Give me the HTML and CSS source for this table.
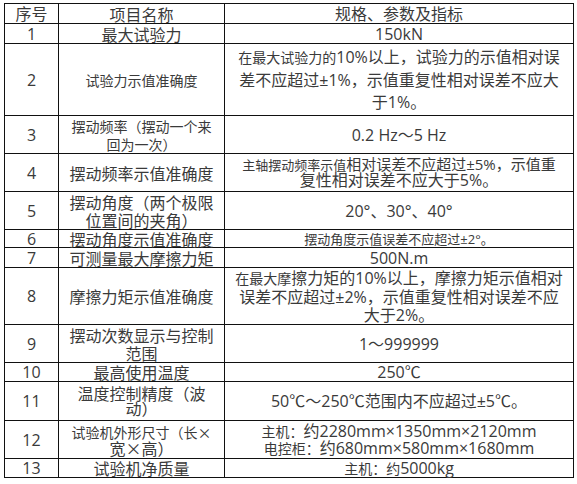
FILE: index.html
```html
<!DOCTYPE html>
<html lang="zh-CN">
<head>
<meta charset="utf-8">
<title>规格、参数及指标</title>
<link rel="stylesheet" href="styles.css">
</head>
<body>
<table class="spec">
  <colgroup>
    <col class="c-no">
    <col class="c-name">
    <col class="c-val">
  </colgroup>
  <tr class="r20">
    <td>序号</td><td class="nm">项目名称</td><td>规格、参数及指标</td>
  </tr>
  <tr class="r20">
    <td>1</td><td class="nm">最大试验力</td><td>150kN</td>
  </tr>
  <tr class="r72">
    <td>2</td>
    <td class="nm f14">试验力示值准确度</td>
    <td class="lh22"><span class="sm">在最大试验力的</span>10%以上，试验力的示值相对误<br>差不应超过±1%，示值重复性相对误差不应大<br>于1%。</td>
  </tr>
  <tr class="r38">
    <td>3</td>
    <td class="nm f14 lh18">摆动频率（摆动一个来<br>回为一次）</td>
    <td>0.2 Hz～5 Hz</td>
  </tr>
  <tr class="r38">
    <td>4</td>
    <td class="nm">摆动频率示值准确度</td>
    <td class="lh15"><span class="xs">主轴摆动频率示值</span><span class="md">相对误差不应超过±5%，示值重</span><br>复性相对误差不应大于5%。</td>
  </tr>
  <tr class="r38">
    <td>5</td>
    <td class="nm lh18">摆动角度（两个极限<br>位置间的夹角）</td>
    <td>20°、30°、40°</td>
  </tr>
  <tr class="r18">
    <td>6</td>
    <td class="nm">摆动角度示值准确度</td>
    <td class="f13">摆动角度示值误差不应超过±2°。</td>
  </tr>
  <tr class="r20">
    <td>7</td>
    <td class="nm">可测量最大摩擦力矩</td>
    <td>500N.m</td>
  </tr>
  <tr class="r57">
    <td>8</td>
    <td class="nm">摩擦力矩示值准确度</td>
    <td class="lh18"><span class="sm">在最大摩</span>擦力矩的10%以上，摩擦力矩示值相对<br>误差不应超过±2%，示值重复性相对误差不应<br>大于2%。</td>
  </tr>
  <tr class="r38">
    <td>9</td>
    <td class="nm lh18">摆动次数显示与控制<br>范围</td>
    <td>1～999999</td>
  </tr>
  <tr class="r19">
    <td>10</td>
    <td class="nm">最高使用温度</td>
    <td>250℃</td>
  </tr>
  <tr class="r39">
    <td>11</td>
    <td class="nm lh15">温度控制精度（波<br>动）</td>
    <td>50℃～250℃范围内不应超过±5℃。</td>
  </tr>
  <tr class="r38">
    <td>12</td>
    <td class="nm lh16"><span class="sm">试验机外形尺寸（长×</span><br>宽×高）</td>
    <td class="lh17"><span class="sm">主机：</span>约2280mm×1350mm×2120mm<br><span class="sm">电控柜：</span>约680mm×580mm×1680mm</td>
  </tr>
  <tr class="r19">
    <td>13</td>
    <td class="nm">试验机净质量</td>
    <td><span class="sm">主机：约</span>5000kg</td>
  </tr>
</table>
</body>
</html>
```

FILE: styles.css
```css
html, body {
  margin: 0;
  padding: 0;
  background: #ffffff;
}

body {
  padding: 3px 0 0 4px;
  font-family: "Open Sans", "Noto Sans CJK SC", sans-serif;
  color: #3a3a3a;
}

.spec {
  border-collapse: collapse;
  table-layout: fixed;
  width: 569px;
  font-size: 16px;
  line-height: 14px;
}

.c-no { width: 54px; }
.c-name { width: 166px; }
.c-val { width: 349px; }

.spec td {
  border: 1px solid #111111;
  padding: 0 2px;
  text-align: center;
  vertical-align: middle;
  white-space: nowrap;
}

.spec td.nm {
  font-family: "Noto Sans CJK SC", sans-serif;
}

.r18 { height: 18px; }
.r19 { height: 19px; }
.r20 { height: 20px; }
.r38 { height: 38px; }
.r39 { height: 39px; }
.r57 { height: 57px; }
.r72 { height: 72px; }

.f13 { font-size: 13px; }
.f14 { font-size: 14px; }

.lh15 { line-height: 15px; }
.lh16 { line-height: 16px; }
.lh17 { line-height: 17px; }
.lh18 { line-height: 18px; }
.lh22 { line-height: 22px; }

.sm { font-size: 14px; }
.xs { font-size: 13px; }
.md { font-size: 15px; }
```
